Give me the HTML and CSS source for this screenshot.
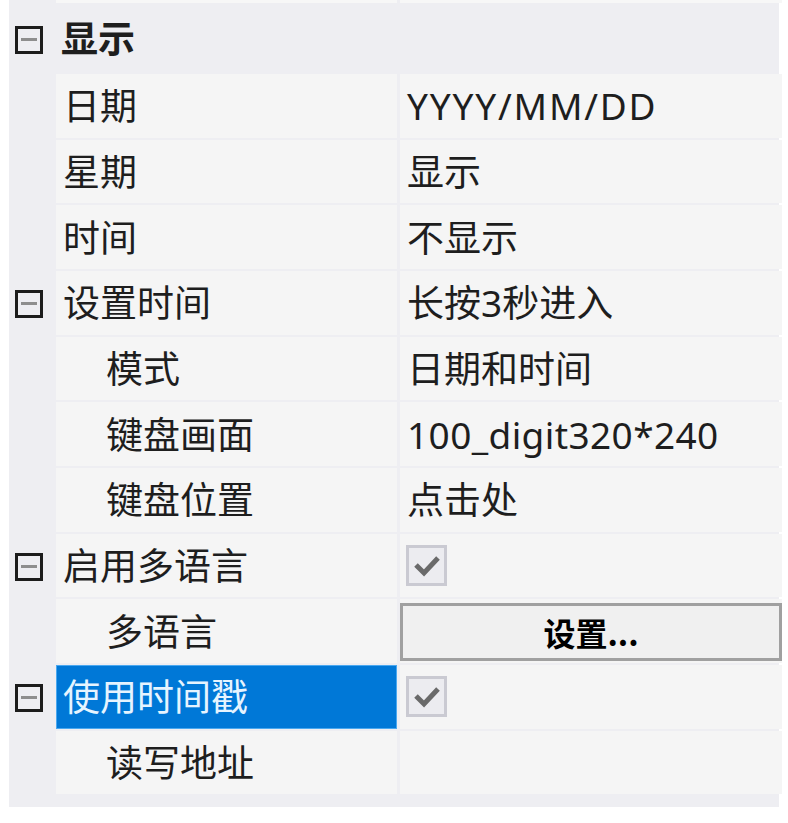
FILE: index.html
```html
<!DOCTYPE html>
<html lang="zh-CN">
<head>
  <meta charset="UTF-8" />
  <title>属性</title>
  <link rel="stylesheet" href="styles.css">
</head>
<body>
  <div class="grid">
    <!-- linha cortada no topo -->
    <div class="row row-top">
      <div class="gutter"></div>
      <div class="name"></div>
      <div class="value"></div>
    </div>

    <div class="row category">
      <div class="gutter"><span class="expander"></span></div>
      <div class="name">显示</div>
    </div>

    <div class="row">
      <div class="gutter"></div>
      <div class="name">日期</div>
      <div class="value latin-wide">YYYY/MM/DD</div>
    </div>
    <div class="row">
      <div class="gutter"></div>
      <div class="name">星期</div>
      <div class="value">显示</div>
    </div>
    <div class="row">
      <div class="gutter"></div>
      <div class="name">时间</div>
      <div class="value">不显示</div>
    </div>

    <div class="row">
      <div class="gutter"><span class="expander"></span></div>
      <div class="name">设置时间</div>
      <div class="value">长按3秒进入</div>
    </div>
    <div class="row">
      <div class="gutter"></div>
      <div class="name sub">模式</div>
      <div class="value">日期和时间</div>
    </div>
    <div class="row">
      <div class="gutter"></div>
      <div class="name sub">键盘画面</div>
      <div class="value latin">100_digit320*240</div>
    </div>
    <div class="row">
      <div class="gutter"></div>
      <div class="name sub">键盘位置</div>
      <div class="value">点击处</div>
    </div>

    <div class="row">
      <div class="gutter"><span class="expander"></span></div>
      <div class="name">启用多语言</div>
      <div class="value"><span class="check"><svg viewBox="0 0 35 35" width="35" height="35"><polyline points="7,17 15,25 29,10" /></svg></span></div>
    </div>
    <div class="row">
      <div class="gutter"></div>
      <div class="name sub">多语言</div>
      <div class="value cell-btn"><button class="btn">设置...</button></div>
    </div>

    <div class="row">
      <div class="gutter"><span class="expander"></span></div>
      <div class="name selected">使用时间戳</div>
      <div class="value"><span class="check"><svg viewBox="0 0 35 35" width="35" height="35"><polyline points="7,17 15,25 29,10" /></svg></span></div>
    </div>
    <div class="row">
      <div class="gutter"></div>
      <div class="name sub">读写地址</div>
      <div class="value"></div>
    </div>
  </div>
</body>
</html>
```

FILE: styles.css
```css
/* ================================
   Geral
   ================================ */
* {
  margin: 0;
  padding: 0;
  box-sizing: border-box;
}
body {
  background: #fff;
  font-family: "Noto Sans", "Noto Sans CJK SC", sans-serif;
  font-size: 37px;
  color: #1e1e1e;
}

/* ================================
   Grade de propriedades
   ================================ */
.grid {
  width: 770px;
  margin-left: 9px;
  background: #eeeef2;
  display: flex;
  flex-direction: column;
  gap: 2px;
  padding-bottom: 13px;
}

.row {
  display: grid;
  grid-template-columns: 44px 341px 382px;
  column-gap: 3px;
  height: 63.67px;
}
.row-top {
  height: 3px;
}
.row-top .name,
.row-top .value {
  background: #f7f7f7;
}

.gutter {
  display: flex;
  align-items: center;
  padding-left: 6px;
}

.name,
.value {
  background: #f5f5f5;
  display: flex;
  align-items: center;
  white-space: nowrap;
  line-height: 1;
}
.name {
  padding-left: 7px;
}
.name.sub {
  padding-left: 50px;
}
.value {
  padding-left: 7px;
}
.latin-wide {
  letter-spacing: 1.8px;
}
.latin {
  letter-spacing: 0.4px;
}

/* Categoria (linha cinza inteira) */
.category {
  height: 67px;
}
.category .name {
  background: transparent;
  grid-column: 2 / 4;
  padding-left: 5px;
  font-weight: bold;
}

/* Linha selecionada */
.name.selected {
  background: #0078d7;
  color: #e6f4ff;
  box-shadow: inset 0 0 0 1px #4aa8f0;
}

/* Botão de expandir */
.expander {
  width: 28px;
  height: 28px;
  border: 3px solid #1c1c1c;
  position: relative;
  margin-top: 3px;
}
.expander::after {
  content: "";
  position: absolute;
  left: 3px;
  right: 3px;
  top: 9px;
  height: 3px;
  background: #8e8e8e;
}

/* Caixa de seleção */
.check {
  width: 41px;
  height: 41px;
  margin-left: -1px;
  border: 3px solid #cacad2;
  background: #ececf0;
  display: flex;
  align-items: center;
  justify-content: center;
}
.check polyline {
  fill: none;
  stroke: #6a6a6a;
  stroke-width: 5;
}

/* Botão "设置..." */
.cell-btn {
  padding: 4px 0 2px 0;
  align-items: stretch;
}
.btn {
  width: 100%;
  border: 3px solid #a0a0a0;
  background: #f0f0f0;
  font-family: "Noto Sans CJK SC", sans-serif;
  font-size: 32px;
  color: #000;
  font-weight: bold;
}
```
